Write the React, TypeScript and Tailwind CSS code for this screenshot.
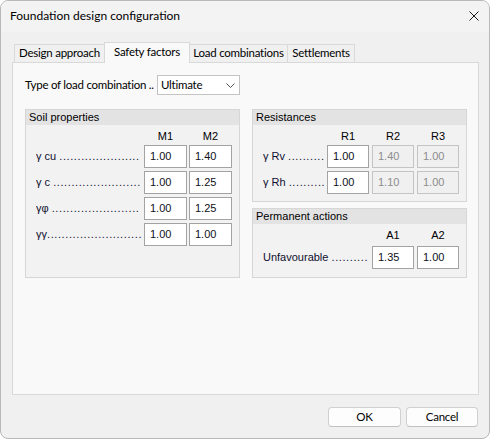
import React from 'react';

const tabs = [
  { label: 'Design approach', w: 'w-[91px]', active: false },
  { label: 'Safety factors', w: 'w-[86px]', active: true },
  { label: 'Load combinations', w: 'w-[99px]', active: false },
  { label: 'Settlements', w: 'w-[68px]', active: false },
];

const Field = ({ value, disabled, w }: { value: string; disabled?: boolean; w: string }) => (
  <div
    className={`${w} h-[23px] border pl-[5px] pt-[3px] leading-[14px] ${
      disabled ? 'bg-[#f0f0f0] border-[#c4c4c4] text-[#8c8c8c]' : 'bg-white border-[#a3a3a3] text-[#101020]'
    }`}
  >
    {value}
  </div>
);

// label followed by leader dots up to the first input
const Label = ({ text, dots, w }: { text: string; dots: number; w: string }) => (
  <div className={`${w} overflow-hidden whitespace-nowrap pt-[4px] leading-[14px] text-[#101030]`}>
    {text}
    <span className="tracking-[0.6px]">{'.'.repeat(dots)}</span>
  </div>
);

const GroupHeader = ({ title }: { title: string }) => (
  <div className="h-[15px] bg-[#e3e3e3] pl-[3px] leading-[14px] text-black">{title}</div>
);

const soilRows = [
  { label: 'γ cu ', dots: 22, m1: '1.00', m2: '1.40' },
  { label: 'γ c ', dots: 24, m1: '1.00', m2: '1.25' },
  { label: 'γφ ', dots: 24, m1: '1.00', m2: '1.25' },
  { label: 'γγ', dots: 26, m1: '1.00', m2: '1.00' },
];

const resRows = [
  { label: 'γ Rv ', dots: 10, r1: '1.00', r2: '1.40', r3: '1.00' },
  { label: 'γ Rh ', dots: 10, r1: '1.00', r2: '1.10', r3: '1.00' },
];

export default function App() {
  return (
    <div className="w-[490px] h-[439px] bg-[#f0f0f0] border border-[#b8b8b8] rounded-[8px] overflow-hidden flex flex-col font-['Lato',sans-serif] text-[11.5px] tracking-[-0.25px] text-black">
      {/* title bar */}
      <div className="h-[31px] shrink-0 bg-[#f3f3f3] flex items-center justify-between pl-[9px] pr-[10px]">
        <span className="text-[12px] tracking-normal leading-[16px] pb-[1px]">Foundation design configuration</span>
        <svg width="10" height="10" viewBox="0 0 10 10" className="mb-[1px]">
          <path d="M0.5 0.5L9.5 9.5M9.5 0.5L0.5 9.5" stroke="#1a1a1a" strokeWidth="1" />
        </svg>
      </div>

      <div className="flex flex-col pl-[11px] pr-[10px]">
        {/* tabs */}
        <div className="mt-[10px] h-[20px] flex items-end pl-[2px] relative z-10">
          {tabs.map((t, i) => (
            <div
              key={t.label}
              className={`${t.w} ${i > 0 ? '-ml-px' : ''} border-t border-l border-r border-[#d9d9d9] flex items-center justify-center whitespace-nowrap ${
                t.active ? 'h-[21px] -mb-px bg-[#f9f9f9] pb-[3px] relative z-10' : 'h-[18px] bg-[#f0f0f0] pb-[1px]'
              }`}
            >
              {t.label}
            </div>
          ))}
        </div>

        {/* tab page */}
        <div className="w-[467px] h-[333px] bg-[#f9f9f9] border border-[#d9d9d9] pl-[12px] pt-[12px]">
          <div className="flex items-center h-[20px]">
            <span className="w-[132px] whitespace-nowrap">Type of load combination ..</span>
            <div className="w-[83px] h-[20px] bg-white border border-[#c3c3c3] flex items-center justify-between pl-[3px] pr-[4px]">
              <span className="leading-[14px]">Ultimate</span>
              <svg width="9" height="5" viewBox="0 0 9 5">
                <path d="M0.5 0.5L4.5 4.5L8.5 0.5" fill="none" stroke="#555" strokeWidth="1" />
              </svg>
            </div>
          </div>

          <div className="mt-[14px] flex gap-[12px] font-['Liberation_Sans',sans-serif] text-[11px] tracking-normal">
            {/* soil properties */}
            <div className="w-[215px] h-[169px] bg-[#f2f2f2] border border-[#d6d6d6]">
              <GroupHeader title="Soil properties" />
              <div className="pl-[10px]">
                <div className="h-[20px] flex items-end pb-[2px] pl-[108px] gap-[2px]">
                  <div className="w-[43px] text-center leading-[13px]">M1</div>
                  <div className="w-[43px] text-center leading-[13px]">M2</div>
                </div>
                <div className="flex flex-col gap-[3px]">
                  {soilRows.map((r) => (
                    <div key={r.label} className="flex">
                      <Label text={r.label} dots={r.dots} w="w-[106px]" />
                      <div className="flex gap-[2px] ml-[2px]">
                        <Field value={r.m1} w="w-[43px]" />
                        <Field value={r.m2} w="w-[43px]" />
                      </div>
                    </div>
                  ))}
                </div>
              </div>
            </div>

            <div className="w-[215px] flex flex-col gap-[6px]">
              {/* resistances */}
              <div className="h-[93px] bg-[#f2f2f2] border border-[#d6d6d6]">
                <GroupHeader title="Resistances" />
                <div className="pl-[10px]">
                  <div className="h-[20px] flex items-end pb-[2px] pl-[64px] gap-[3px]">
                    <div className="w-[42px] text-center leading-[13px]">R1</div>
                    <div className="w-[42px] text-center leading-[13px]">R2</div>
                    <div className="w-[42px] text-center leading-[13px]">R3</div>
                  </div>
                  <div className="flex flex-col gap-[3px]">
                    {resRows.map((r) => (
                      <div key={r.label} className="flex">
                        <Label text={r.label} dots={r.dots} w="w-[62px]" />
                        <div className="flex gap-[3px] ml-[2px]">
                          <Field value={r.r1} w="w-[42px]" />
                          <Field value={r.r2} w="w-[42px]" disabled />
                          <Field value={r.r3} w="w-[42px]" disabled />
                        </div>
                      </div>
                    ))}
                  </div>
                </div>
              </div>

              {/* permanent actions */}
              <div className="h-[70px] bg-[#f2f2f2] border border-[#d6d6d6]">
                <GroupHeader title="Permanent actions" />
                <div className="pl-[10px]">
                  <div className="h-[22px] flex items-end pb-[4px] pl-[109px] gap-[3px]">
                    <div className="w-[42px] text-center leading-[13px]">A1</div>
                    <div className="w-[42px] text-center leading-[13px]">A2</div>
                  </div>
                  <div className="flex">
                    <Label text="Unfavourable " dots={10} w="w-[107px]" />
                    <div className="flex gap-[3px] ml-[2px]">
                      <Field value="1.35" w="w-[42px]" />
                      <Field value="1.00" w="w-[42px]" />
                    </div>
                  </div>
                </div>
              </div>
            </div>
          </div>
        </div>

        {/* buttons */}
        <div className="mt-[12px] flex justify-end gap-[5px] pr-[1px]">
          <button className="w-[73px] h-[20px] bg-[#fdfdfd] border border-[#d0d0d0] border-b-[#c0c0c0] rounded-[4px] leading-[16px]">
            OK
          </button>
          <button className="w-[72px] h-[20px] bg-[#fdfdfd] border border-[#d0d0d0] border-b-[#c0c0c0] rounded-[4px] leading-[16px]">
            Cancel
          </button>
        </div>
      </div>
    </div>
  );
}
